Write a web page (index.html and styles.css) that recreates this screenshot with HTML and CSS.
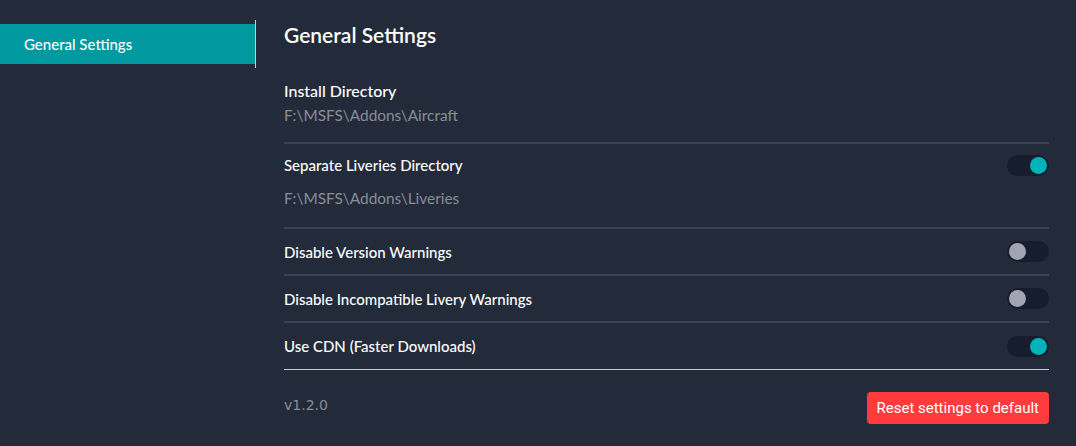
FILE: index.html
```html
<!DOCTYPE html>
<html>
<head>
<meta charset="utf-8">
<link rel="stylesheet" href="styles.css">
</head>
<body>
<div class="app">
  <nav class="sidebar">
    <div class="nav-item active">General Settings</div>
  </nav>
  <main class="content">
    <h1 class="title">General Settings</h1>
    <section class="group">
      <div class="label">Install Directory</div>
      <div class="path">F:\MSFS\Addons\Aircraft</div>
    </section>
    <section class="group liveries">
      <div class="row">
        <span class="row-label">Separate Liveries Directory</span>
        <span class="toggle on"><span class="knob"></span></span>
      </div>
      <div class="path path2">F:\MSFS\Addons\Liveries</div>
    </section>
    <section class="row-item">
      <span class="row-label">Disable Version Warnings</span>
      <span class="toggle"><span class="knob"></span></span>
    </section>
    <section class="row-item">
      <span class="row-label">Disable Incompatible Livery Warnings</span>
      <span class="toggle"><span class="knob"></span></span>
    </section>
    <section class="row-item last">
      <span class="row-label">Use CDN (Faster Downloads)</span>
      <span class="toggle on"><span class="knob"></span></span>
    </section>
    <footer class="footer">
      <span class="version">v1.2.0</span>
      <button class="reset">Reset settings to default</button>
    </footer>
  </main>
</div>
</body>
</html>
```
FILE: styles.css
```css
* { box-sizing: border-box; }
html, body {
  margin: 0;
  padding: 0;
  background: #232b3b;
  height: 100%;
}
body {
  font-family: "Lato", "Noto Sans", sans-serif;
  color: #ffffff;
}
.app {
  display: flex;
  align-items: flex-start;
  height: 446px;
}
.sidebar {
  width: 256px;
  flex: none;
  margin-top: 20px;
  padding: 4px 0;
  border-right: 1px solid #c9ccd2;
}
.nav-item {
  height: 40px;
  display: flex;
  align-items: center;
  padding-left: 24px;
  font-size: 15px;
  font-weight: 500;
  color: #ffffff;
}
.nav-item.active {
  background: #00999f;
}
.content {
  flex: 1;
  margin-left: 28px;
  margin-right: 27px;
  display: flex;
  flex-direction: column;
}
.title {
  margin: 22px 0 0 0;
  font-size: 21px;
  font-weight: 600;
  line-height: 26px;
  color: #ffffff;
}
.group {
  border-bottom: 2px solid #3a4253;
}
.group:first-of-type {
  margin-top: 33px;
  padding-bottom: 17px;
}
.label {
  font-size: 16px;
  font-weight: 500;
  line-height: 20px;
}
.path {
  font-size: 15.4px;
  color: #888d96;
  line-height: 20px;
  margin-top: 4px;
}
.liveries {
  padding-top: 10px;
  padding-bottom: 19px;
}
.row {
  display: flex;
  justify-content: space-between;
  align-items: center;
  height: 22px;
}
.path2 {
  margin-top: 12px;
}
.row-label {
  font-size: 15px;
  font-weight: 500;
}
.row-item {
  display: flex;
  justify-content: space-between;
  align-items: center;
  height: 47px;
  border-bottom: 2px solid #3a4253;
}
.row-item.last {
  border-bottom: 1px solid #c9ccd2;
}
.toggle {
  width: 42px;
  height: 21px;
  border-radius: 11px;
  background: #161d2c;
  display: flex;
  align-items: center;
  padding: 0 2px;
}
.knob {
  width: 17px;
  height: 17px;
  border-radius: 50%;
  background: #a0a5b1;
}
.toggle.on {
  justify-content: flex-end;
}
.toggle.on .knob {
  background: #00b3bb;
}
.footer {
  display: flex;
  justify-content: space-between;
  align-items: flex-start;
  margin-top: 22px;
}
.version {
  font-family: "DejaVu Sans", sans-serif;
  font-size: 14px;
  color: #878c95;
  margin-top: 5px;
}
.reset {
  font-family: "Roboto", "Inter", sans-serif;
  font-size: 15px;
  color: #ffffff;
  background: #ff3b3e;
  border: none;
  border-radius: 4px;
  height: 32px;
  padding: 0 10px;
  margin-top: 0;
}
```
